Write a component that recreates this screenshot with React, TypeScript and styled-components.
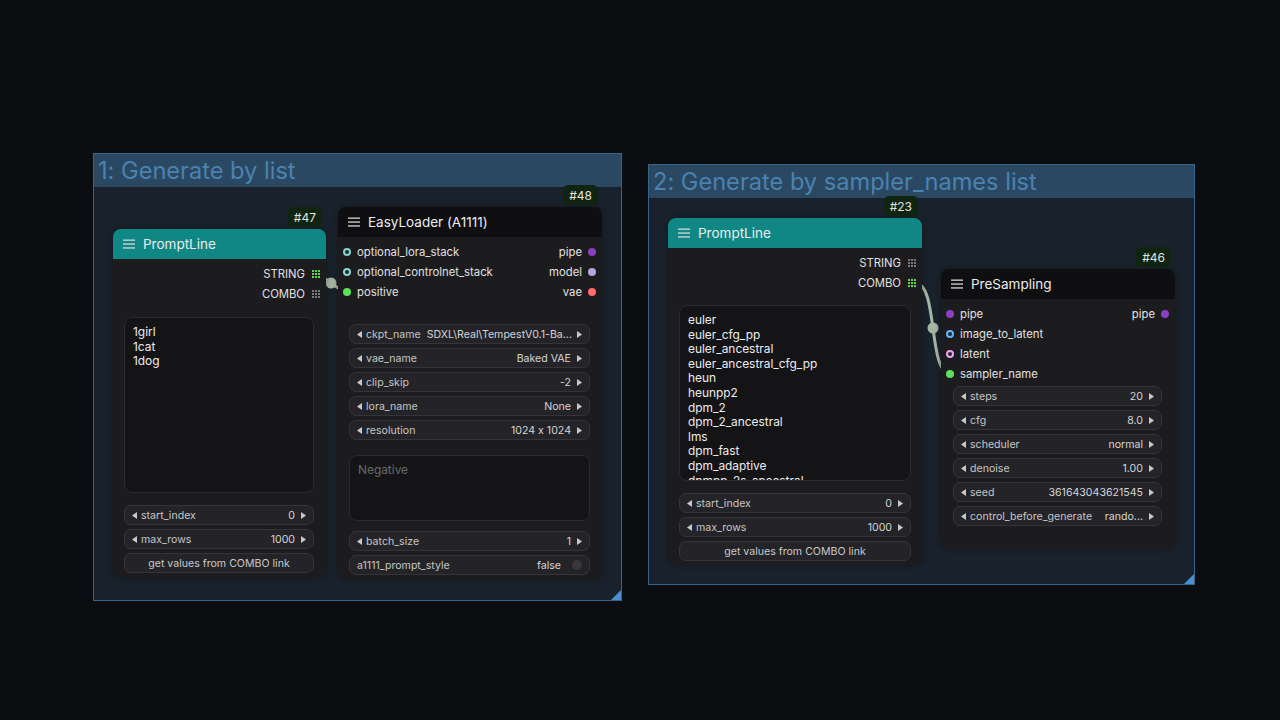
import React from 'react';
import styled, { createGlobalStyle } from 'styled-components';

const GlobalStyle = createGlobalStyle`
  html, body { margin: 0; padding: 0; background: #0c0d10; }
  body {
    font-family: Inter, "Liberation Sans", sans-serif;
    font-feature-settings: "calt" 0;
  }
`;

const Canvas = styled.div`
  position: relative;
  width: 1280px;
  height: 720px;
  overflow: hidden;
  background: #0c0d10;
`;

const GroupFrame = styled.div<{ $x: number; $y: number; $w: number; $h: number }>`
  position: absolute;
  left: ${(p) => p.$x}px;
  top: ${(p) => p.$y}px;
  width: ${(p) => p.$w}px;
  height: ${(p) => p.$h}px;
  box-sizing: border-box;
  background: #19222c;
  border: 1px solid #36658a;
  display: flex;
  flex-direction: column;
`;

const GroupHeader = styled.div`
  height: 33px;
  background: #2a4862;
  display: flex;
  align-items: center;
  padding-left: 4px;
`;

const GroupTitle = styled.span`
  font-size: 23.6px;
  color: #4a82b0;
  white-space: nowrap;
`;

const ResizeCorner = styled.div`
  position: absolute;
  right: 0;
  bottom: 0;
  width: 0;
  height: 0;
  border-left: 10px solid transparent;
  border-bottom: 10px solid #4a8fd0;
`;

const LinkLayer = styled.svg`
  position: absolute;
  left: 0;
  top: 0;
  width: 1280px;
  height: 720px;
  pointer-events: none;
`;

const NodeBox = styled.div<{ $x: number; $y: number; $w: number }>`
  position: absolute;
  left: ${(p) => p.$x}px;
  top: ${(p) => p.$y}px;
  width: ${(p) => p.$w}px;
  background: #1c1c1f;
  border-radius: 8px;
  box-shadow: 0 0 6px rgba(0, 0, 0, 0.35);
  display: flex;
  flex-direction: column;
`;

const NodeHeader = styled.div<{ $color?: string }>`
  height: 30px;
  background: ${(p) => p.$color ?? '#0f0f11'};
  border-radius: 8px 8px 0 0;
  display: flex;
  align-items: center;
  gap: 8px;
  padding-left: 10px;
  color: #ececec;
  font-size: 13.5px;
`;

const Badge = styled.div`
  position: absolute;
  right: 4px;
  bottom: calc(100% + 2px);
  height: 20px;
  padding: 0 6px;
  background: #0f2511;
  color: #e2e2e2;
  font-size: 12px;
  border-radius: 5px;
  display: flex;
  align-items: center;
`;

const Slots = styled.div<{ $pt: number }>`
  display: flex;
  flex-direction: column;
  padding: ${(p) => p.$pt}px 6px 0 5px;
`;

const SlotRow = styled.div`
  height: 20px;
  display: flex;
  align-items: center;
  justify-content: space-between;
  font-size: 11.3px;
  color: #e0e0e0;
`;

const SlotSide = styled.div`
  display: flex;
  align-items: center;
  gap: 6px;
`;

const Dot = styled.span<{ $color: string; $ring?: boolean }>`
  width: 8px;
  height: 8px;
  border-radius: 50%;
  box-sizing: border-box;
  background: ${(p) => (p.$ring ? '#1e2a2c' : p.$color)};
  border: ${(p) => (p.$ring ? `2px solid ${p.$color}` : 'none')};
  flex: none;
`;

const Widgets = styled.div<{ $mt: number; $pb: number; $pl?: number; $pr?: number }>`
  display: flex;
  flex-direction: column;
  gap: 4px;
  margin-top: ${(p) => p.$mt}px;
  padding: 0 ${(p) => p.$pr ?? 12}px ${(p) => p.$pb}px ${(p) => p.$pl ?? 11}px;
`;

const WidgetBox = styled.div<{ $center?: boolean }>`
  height: 20px;
  box-sizing: border-box;
  border: 1px solid #353539;
  background: #242428;
  border-radius: 7px;
  display: flex;
  align-items: center;
  justify-content: ${(p) => (p.$center ? 'center' : 'flex-start')};
  padding: 0 7px;
  font-size: 10.6px;
  color: #c8c8c8;
  gap: 4px;
  white-space: nowrap;
`;

const WidgetLabel = styled.span`
  flex: none;
  color: #c4c4c4;
`;

const WidgetValue = styled.span`
  flex: 1;
  min-width: 0;
  text-align: right;
  color: #d4d4d4;
  margin: 0 2px 0 2px;
`;

const ToggleKnob = styled.span`
  width: 10px;
  height: 10px;
  border-radius: 50%;
  background: #38383c;
  margin-left: 5px;
`;

const TextArea = styled.div<{ $h: number; $mt?: number; $mb?: number; $placeholder?: boolean }>`
  height: ${(p) => p.$h}px;
  margin-top: ${(p) => p.$mt ?? 0}px;
  margin-bottom: ${(p) => p.$mb ?? 0}px;
  box-sizing: border-box;
  background: #141417;
  border: 1px solid #2b2b2e;
  border-radius: 8px;
  padding: 7px 8px;
  font-size: 11.9px;
  line-height: 14.6px;
  color: ${(p) => (p.$placeholder ? '#686868' : '#ececec')};
  overflow: hidden;
  white-space: pre;
`;

const Hamburger = () => (
  <svg width="12" height="10" viewBox="0 0 12 10">
    <rect x="0" y="0.5" width="12" height="1.3" fill="#d8d8d8" />
    <rect x="0" y="4.4" width="12" height="1.3" fill="#d8d8d8" />
    <rect x="0" y="8.3" width="12" height="1.3" fill="#d8d8d8" />
  </svg>
);

const Arrow = ({ dir }: { dir: 'l' | 'r' }) => (
  <svg width="5" height="7" viewBox="0 0 5 7" style={{ flex: 'none' }}>
    {dir === 'l' ? <path d="M5 0 L0 3.5 L5 7 Z" fill="#c8c8c8" /> : <path d="M0 0 L5 3.5 L0 7 Z" fill="#c8c8c8" />}
  </svg>
);

const GridIcon = ({ on }: { on: boolean }) => {
  const c = on ? '#62d64a' : '#77777c';
  const cells = [];
  for (let r = 0; r < 3; r++)
    for (let k = 0; k < 3; k++) cells.push(<rect key={`${r}${k}`} x={k * 3} y={r * 3} width="2" height="2" fill={c} />);
  return (
    <svg width="8" height="8" viewBox="0 0 8 8" style={{ flex: 'none', marginLeft: 1 }}>
      {cells}
    </svg>
  );
};

type Slot = { label: string; color: string; ring?: boolean; grid?: boolean; on?: boolean };

const SlotList = ({ rows, pt }: { rows: [Slot | null, Slot | null][]; pt: number }) => (
  <Slots $pt={pt}>
    {rows.map(([i, o], idx) => (
      <SlotRow key={idx}>
        <SlotSide>
          {i && (
            <>
              <Dot $color={i.color} $ring={i.ring} />
              <span>{i.label}</span>
            </>
          )}
        </SlotSide>
        <SlotSide>
          {o && (
            <>
              <span>{o.label}</span>
              {o.grid ? <GridIcon on={!!o.on} /> : <Dot $color={o.color} $ring={o.ring} />}
            </>
          )}
        </SlotSide>
      </SlotRow>
    ))}
  </Slots>
);

const NumberWidget = ({ label, value }: { label: string; value: string }) => (
  <WidgetBox>
    <Arrow dir="l" />
    <WidgetLabel>{label}</WidgetLabel>
    <WidgetValue>{value}</WidgetValue>
    <Arrow dir="r" />
  </WidgetBox>
);

const ToggleWidget = ({ label, value }: { label: string; value: string }) => (
  <WidgetBox>
    <WidgetLabel>{label}</WidgetLabel>
    <WidgetValue>{value}</WidgetValue>
    <ToggleKnob />
  </WidgetBox>
);

const ButtonWidget = ({ label }: { label: string }) => <WidgetBox $center>{label}</WidgetBox>;

const Node = ({
  x,
  y,
  w,
  id,
  title,
  color,
  children,
}: {
  x: number;
  y: number;
  w: number;
  id: string;
  title: string;
  color?: string;
  children: React.ReactNode;
}) => (
  <NodeBox $x={x} $y={y} $w={w}>
    <Badge>{id}</Badge>
    <NodeHeader $color={color}>
      <Hamburger />
      <span>{title}</span>
    </NodeHeader>
    {children}
  </NodeBox>
);

const Group = ({ x, y, w, h, title }: { x: number; y: number; w: number; h: number; title: string }) => (
  <GroupFrame $x={x} $y={y} $w={w} $h={h}>
    <GroupHeader>
      <GroupTitle>{title}</GroupTitle>
    </GroupHeader>
    <ResizeCorner />
  </GroupFrame>
);

const TEAL = '#0f8784';
const samplers = [
  'euler',
  'euler_cfg_pp',
  'euler_ancestral',
  'euler_ancestral_cfg_pp',
  'heun',
  'heunpp2',
  'dpm_2',
  'dpm_2_ancestral',
  'lms',
  'dpm_fast',
  'dpm_adaptive',
  'dpmpp_2s_ancestral',
].join('\n');

export default function App() {
  return (
    <>
      <GlobalStyle />
      <Canvas>
        <Group x={93} y={153} w={529} h={448} title="1: Generate by list" />
        <Group x={648} y={164} w={547} h={421} title="2: Generate by sampler_names list" />

        <LinkLayer viewBox="0 0 1280 720">
          <path d="M315 274 C323 274 339 292 347 292" stroke="#a6b5a2" strokeWidth="3" fill="none" />
          <circle cx="331" cy="283" r="5.5" fill="#a6b5a2" />
          <path d="M915 283 C939 283 927 374 951 374" stroke="#a6b5a2" strokeWidth="3" fill="none" />
          <circle cx="933" cy="328" r="5.5" fill="#a6b5a2" />
        </LinkLayer>

        <Node x={113} y={229} w={213} id="#47" title="PromptLine" color={TEAL}>
          <SlotList
            pt={5}
            rows={[
              [null, { label: 'STRING', color: '', grid: true, on: true }],
              [null, { label: 'COMBO', color: '', grid: true }],
            ]}
          />
          <Widgets $mt={13} $pb={4}>
            <TextArea $h={176} $mb={8}>{'1girl\n1cat\n1dog'}</TextArea>
            <NumberWidget label="start_index" value="0" />
            <NumberWidget label="max_rows" value="1000" />
            <ButtonWidget label="get values from COMBO link" />
          </Widgets>
        </Node>

        <Node x={338} y={207} w={264} id="#48" title="EasyLoader (A1111)">
          <SlotList
            pt={5}
            rows={[
              [
                { label: 'optional_lora_stack', color: '#86d6cf', ring: true },
                { label: 'pipe', color: '#8a3fc2' },
              ],
              [
                { label: 'optional_controlnet_stack', color: '#86d6cf', ring: true },
                { label: 'model', color: '#b7a4e0' },
              ],
              [{ label: 'positive', color: '#5fe05c' }, { label: 'vae', color: '#ff6b6b' }],
            ]}
          />
          <Widgets $mt={22} $pb={4}>
            <NumberWidget label="ckpt_name" value="SDXL\Real\TempestV0.1-Ba..." />
            <NumberWidget label="vae_name" value="Baked VAE" />
            <NumberWidget label="clip_skip" value="-2" />
            <NumberWidget label="lora_name" value="None" />
            <NumberWidget label="resolution" value="1024 x 1024" />
            <TextArea $h={66} $mt={11} $mb={6} $placeholder>
              Negative
            </TextArea>
            <NumberWidget label="batch_size" value="1" />
            <ToggleWidget label="a1111_prompt_style" value="false" />
          </Widgets>
        </Node>

        <Node x={668} y={218} w={254} id="#23" title="PromptLine" color={TEAL}>
          <SlotList
            pt={5}
            rows={[
              [null, { label: 'STRING', color: '', grid: true }],
              [null, { label: 'COMBO', color: '', grid: true, on: true }],
            ]}
          />
          <Widgets $mt={12} $pb={4} $pr={11}>
            <TextArea $h={176} $mb={8}>{samplers}</TextArea>
            <NumberWidget label="start_index" value="0" />
            <NumberWidget label="max_rows" value="1000" />
            <ButtonWidget label="get values from COMBO link" />
          </Widgets>
        </Node>

        <Node x={941} y={269} w={234} id="#46" title="PreSampling">
          <SlotList
            pt={5}
            rows={[
              [{ label: 'pipe', color: '#8a3fc2' }, { label: 'pipe', color: '#8a3fc2' }],
              [{ label: 'image_to_latent', color: '#64b4f4', ring: true }, null],
              [{ label: 'latent', color: '#f5a0f0', ring: true }, null],
              [{ label: 'sampler_name', color: '#5fe05c' }, null],
            ]}
          />
          <Widgets $mt={2} $pb={23} $pl={12} $pr={13}>
            <NumberWidget label="steps" value="20" />
            <NumberWidget label="cfg" value="8.0" />
            <NumberWidget label="scheduler" value="normal" />
            <NumberWidget label="denoise" value="1.00" />
            <NumberWidget label="seed" value="361643043621545" />
            <NumberWidget label="control_before_generate" value="rando..." />
          </Widgets>
        </Node>
      </Canvas>
    </>
  );
}
